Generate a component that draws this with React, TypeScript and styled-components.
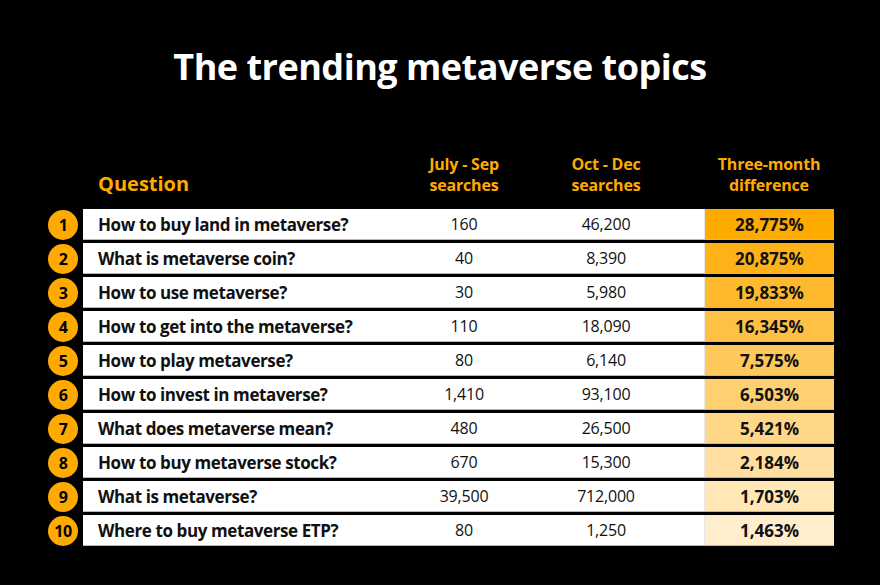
import React from 'react'
import styled, { createGlobalStyle } from 'styled-components'

const ORANGE = '255, 170, 0'

const rows = [
    { q: 'How to buy land in metaverse?', a: '160', b: '46,200', d: '28,775%' },
    { q: 'What is metaverse coin?', a: '40', b: '8,390', d: '20,875%' },
    { q: 'How to use metaverse?', a: '30', b: '5,980', d: '19,833%' },
    { q: 'How to get into the metaverse?', a: '110', b: '18,090', d: '16,345%' },
    { q: 'How to play metaverse?', a: '80', b: '6,140', d: '7,575%' },
    { q: 'How to invest in metaverse?', a: '1,410', b: '93,100', d: '6,503%' },
    { q: 'What does metaverse mean?', a: '480', b: '26,500', d: '5,421%' },
    { q: 'How to buy metaverse stock?', a: '670', b: '15,300', d: '2,184%' },
    { q: 'What is metaverse?', a: '39,500', b: '712,000', d: '1,703%' },
    { q: 'Where to buy metaverse ETP?', a: '80', b: '1,250', d: '1,463%' },
]

const GlobalStyle = createGlobalStyle`
    body {
        margin: 0;
        background: #000;
        font-family: "Open Sans", "Noto Sans", sans-serif;
    }
`

const App: React.FC = () => {
    return (
        <Page>
            <GlobalStyle />
            <Title>The trending metaverse topics</Title>
            <Table>
                <HeadRow>
                    <QuestionHead>Question</QuestionHead>
                    <ColHead>July - Sep<br />searches</ColHead>
                    <ColHead>Oct - Dec<br />searches</ColHead>
                    <span />
                    <ColHead>Three-month<br />difference</ColHead>
                </HeadRow>
                {rows.map((row, index) => (
                    <Row key={index}>
                        <Badge>{index + 1}</Badge>
                        <Cells>
                            <QuestionCell>{row.q}</QuestionCell>
                            <NumCell>{row.a}</NumCell>
                            <NumCell>{row.b}</NumCell>
                            <span />
                            <DiffCell $alpha={1 - index * 0.089}>{row.d}</DiffCell>
                        </Cells>
                    </Row>
                ))}
            </Table>
        </Page>
    )
}

const Page = styled.div`
    width: 880px;
    height: 585px;
    background: #000;
    display: flex;
    flex-direction: column;
    align-items: center;
    overflow: hidden;
`
const Title = styled.h1`
    margin: 42px 0 0;
    color: #fff;
    font-size: 36px;
    font-weight: 700;
    letter-spacing: -0.5px;
    line-height: 50px;
`
const Table = styled.div`
    margin-top: 59px;
    width: 786px;
    margin-left: 2px;
    display: flex;
    flex-direction: column;
    gap: 3px;
`
const grid = `
    display: grid;
    grid-template-columns: 310px 142px 142px 27px 130px;
`
const HeadRow = styled.div`
    ${grid}
    align-items: end;
    margin-left: 35px;
    height: 52px;
    margin-bottom: 3px;
    color: rgb(${ORANGE});
    font-weight: 700;
`
const QuestionHead = styled.div`
    padding-left: 15px;
    padding-bottom: 8px;
    font-size: 20px;
    line-height: 22px;
`
const ColHead = styled.div`
    text-align: center;
    padding-bottom: 7px;
    font-size: 16px;
    line-height: 21px;
    letter-spacing: -0.2px;
`
const Row = styled.div`
    display: flex;
    align-items: center;
    height: 31px;
    gap: 5px;
`
const Badge = styled.div`
    width: 30px;
    height: 30px;
    border-radius: 50%;
    background: rgb(${ORANGE});
    color: #000;
    font-weight: 700;
    font-size: 16px;
    letter-spacing: -0.5px;
    display: flex;
    align-items: center;
    justify-content: center;
`
const Cells = styled.div`
    ${grid}
    height: 31px;
    background: #fff;
    border-bottom: 1px solid #b8b8b8;
    box-sizing: border-box;
    align-items: stretch;
`
const QuestionCell = styled.div`
    display: flex;
    align-items: center;
    padding-left: 15px;
    font-size: 17px;
    font-weight: 700;
    letter-spacing: -0.4px;
    color: #111;
`
const NumCell = styled.div`
    display: flex;
    align-items: center;
    justify-content: center;
    font-size: 16px;
    color: #111;
    letter-spacing: -0.2px;
`
const DiffCell = styled.div<{ $alpha: number }>`
    display: flex;
    align-items: center;
    justify-content: center;
    background: rgba(${ORANGE}, ${(p) => p.$alpha});
    border-left: 1px solid #e8e8e8;
    font-size: 17px;
    font-weight: 700;
    color: #111;
`

export default App
